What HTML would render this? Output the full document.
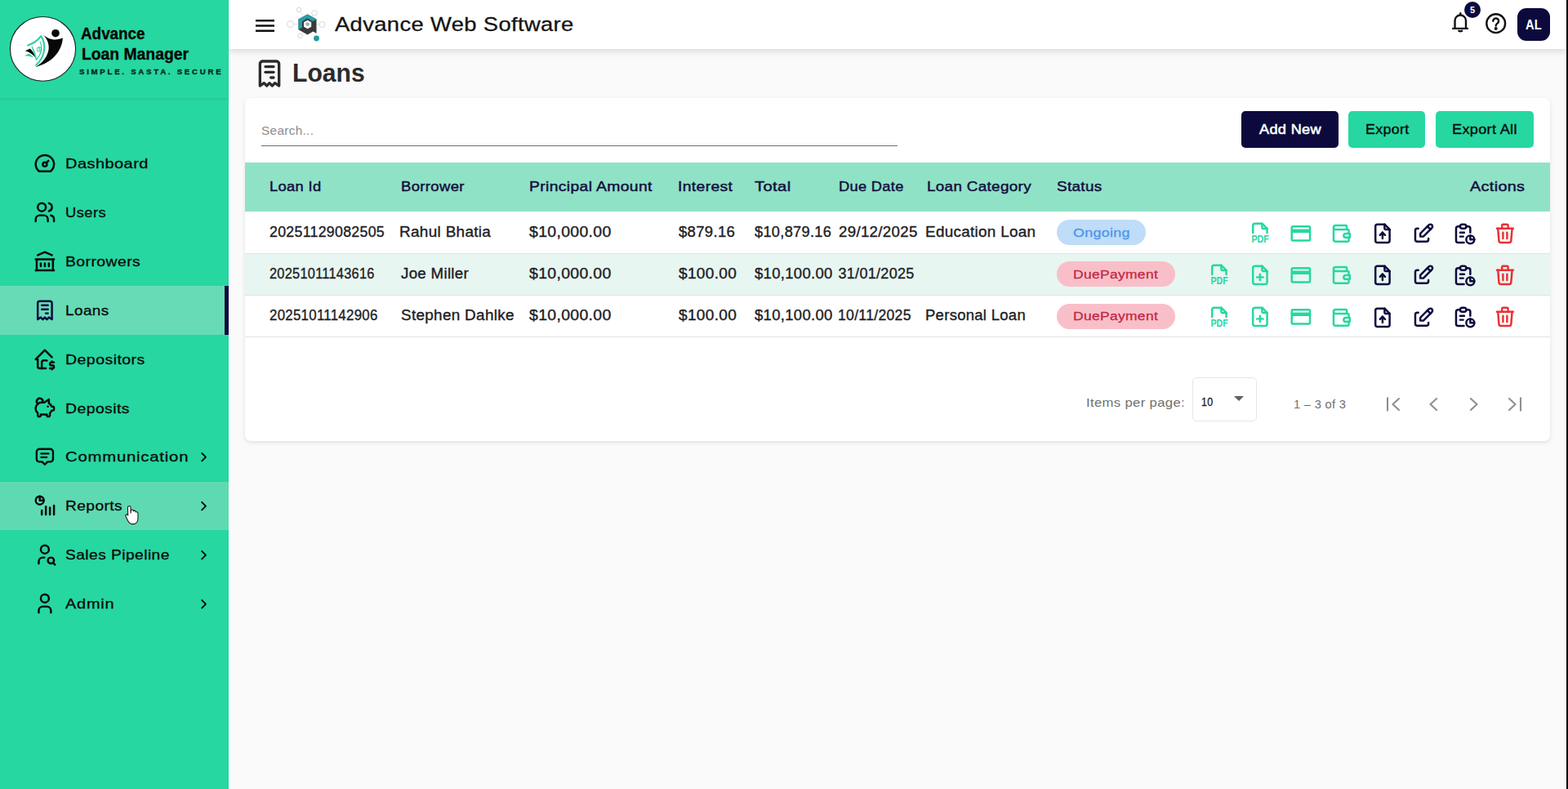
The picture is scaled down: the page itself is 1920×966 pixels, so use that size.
<!DOCTYPE html>
<html lang="en">
<head>
<meta charset="utf-8">
<title>Loans - Advance Loan Manager</title>
<style>
*{box-sizing:border-box;margin:0;padding:0}
html,body{width:1920px;height:966px;overflow:hidden;background:#fbfafa;font-family:"Liberation Sans", sans-serif}
.t{position:absolute;white-space:pre;line-height:1;display:block;transform-origin:0 50%}
svg{display:block}
.side{position:absolute;left:0;top:0;width:280px;height:966px;background:#26d7a1;z-index:3}
.brand{position:absolute;left:0;top:0;width:280px;height:120px;box-shadow:0 1px 3px rgba(0,0,0,.10)}
.item{position:absolute;left:0;width:280px;height:59.9px}
.item.active{background:#66dbb6;border-right:5px solid #0c0a3d}
.item.hover{background:#5edab2}
.ic{position:absolute;width:28px;height:28px}
.chev{position:absolute;left:240.3px;top:20.3px}
.top{position:absolute;left:280px;top:0;width:1638px;height:60px;background:#fff;box-shadow:0 3px 8px rgba(0,0,0,.13);z-index:2}
.burger{position:absolute;left:32.9px;top:23.5px}
.bell{position:absolute;left:1494px;top:13px}
.badge5{position:absolute;left:1513px;top:2px;width:20px;height:20px;border-radius:50%;background:#0c0a3d;color:#fff;font-size:11px;line-height:20px;text-align:center}
.help{position:absolute;left:1537.7px;top:14.6px}
.avatar{position:absolute;left:1578px;top:10px;width:40px;height:40px;border-radius:11px;background:#0c0a3d;color:#fff;font-size:17px;line-height:40px;text-align:center;letter-spacing:.3px}
.pgicon{position:absolute;left:310px;top:70px}
.card{position:absolute;left:300px;top:120px;width:1597.6px;height:420px;background:#fff;border-radius:7px;box-shadow:0 2px 5px rgba(0,0,0,.11)}
.uline{position:absolute;left:320px;top:178px;width:779px;height:1px;background:#6e6e6e}
.btn{position:absolute;top:136px;height:45px;border-radius:5px}
.btn.navy{background:#0c0a3d}
.btn.green{background:#26d7a1}
.thead{position:absolute;left:300px;top:199px;width:1597.6px;height:60px;background:#90e2c6}
.row{position:absolute;left:300px;width:1597.6px;border-bottom:1px solid #e2e2e2}
.row.alt{background:#e8f6f1}
.pill{position:absolute;height:31px;border-radius:16px}
.pill.on{background:#bfdcf8}
.pill.due{background:#f9bfc9}
.act{position:absolute;width:28px;height:28px}
.sel{position:absolute;left:1460px;top:461.5px;width:79px;height:54.5px;border:1px solid #e6e6e6;border-radius:5px;background:#fff}
.caret{position:absolute;left:1511px;top:485px;width:0;height:0;border-left:6px solid transparent;border-right:6px solid transparent;border-top:6px solid #606060}
.pg{position:absolute;width:28px;height:28px;color:#8f8f8f}
.edge{position:absolute;left:1918px;top:0;width:2px;height:966px;background:#000;z-index:5}
</style>
</head>
<body>
<aside class="side">
<div class="brand">
<svg class="logo" width="84" height="84" viewBox="10 18 84 84" style="position:absolute;left:10px;top:18px"><ellipse cx="52.5" cy="59.85" rx="40.1" ry="39.4" fill="#fff" stroke="#15231d" stroke-width="1.1"/><circle cx="68" cy="40.7" r="4.8" fill="#080808"/><path d="M52.6 42.3C56 45.6 61 48.2 66.3 48.4 70.5 48.5 74 47.8 76.8 46.3 76.6 58 68 76 43.2 82.2 53 76.5 58.3 68.5 59.6 60.5 60.4 53.5 57.5 47.3 52.6 42.3z" fill="#080808"/><g fill="none" stroke="#2dcf9f" stroke-linecap="round" stroke-linejoin="round"><path d="M34.2 55.6C41 53.2 46.6 49.3 50.2 44.2 57.3 55 55.3 69.5 44.2 79.8" stroke-width="2.1"/><path d="M39.3 57.6C41.2 61.5 43.2 66.5 44.6 73.2" stroke-width="1.5"/><path d="M44.6 73.2C50.5 66.5 52.5 59 49.3 51.4" stroke-width="1.1"/><circle cx="48.1" cy="60.5" r="2.9" stroke-width="1"/></g><text x="48.1" y="62.3" text-anchor="middle" font-family="Liberation Sans, sans-serif" font-size="5" font-weight="700" fill="#2dcf9f">$</text><path d="M30.8 62.3L36.8 59.6C40 62.5 42 66 43 70.2 40 66.5 36 63.8 30.8 62.3z" fill="#080808"/><path d="M29.9 68.3L34.9 65.8C37.3 66.8 39.3 68.3 41 70.3 37.3 69 33.6 68.3 29.9 68.3z" fill="#2dcf9f"/></svg>
<span class="t b" style="left:99.00px;top:32.00px;color:#050505;font-size:19.6px;letter-spacing:0.00px;font-weight:700;-webkit-text-stroke:0.3px currentColor;transform:scaleX(0.962);">Advance</span><span class="t b" style="left:99.60px;top:57.00px;color:#050505;font-size:19.6px;letter-spacing:0.00px;font-weight:700;-webkit-text-stroke:0.3px currentColor;transform:scaleX(0.986);">Loan Manager</span><span class="t b" style="left:96.80px;top:84.00px;color:#06241a;font-size:9.2px;letter-spacing:2.60px;font-weight:700;-webkit-text-stroke:0.3px currentColor;transform:scaleX(1.051);">SIMPLE. SASTA. SECURE</span>
</div>
<nav>
<div class="item" style="top:170.00px">
<span class="ic" style="left:40.10px;top:14.80px;color:#0a0a0a"><svg width="29.8" height="29.8" viewBox="0 0 24 24" fill="none" stroke="currentColor" stroke-width="2" stroke-linecap="round" stroke-linejoin="round"><path d="M10 13a2 2 0 1 0 4 0a2 2 0 1 0 -4 0"/><path d="M13.45 11.55l2.05 -2.05"/><path d="M6.4 20a9 9 0 1 1 11.2 0z"/></svg></span>
<span class="t" style="left:80.20px;top:23.00px;color:#0a0a0a;font-size:16.9px;letter-spacing:0.40px;-webkit-text-stroke:0.3px currentColor;transform:scaleX(1.181);">Dashboard</span>
</div>
<div class="item" style="top:229.93px">
<span class="ic" style="left:40.10px;top:14.80px;color:#0a0a0a"><svg width="29.8" height="29.8" viewBox="0 0 24 24" fill="none" stroke="currentColor" stroke-width="2" stroke-linecap="round" stroke-linejoin="round"><path d="M5 7a4 4 0 1 0 8 0a4 4 0 1 0 -8 0"/><path d="M3 21v-2a4 4 0 0 1 4 -4h4a4 4 0 0 1 4 4v2"/><path d="M16 3.13a4 4 0 0 1 0 7.75"/><path d="M21 21v-2a4 4 0 0 0 -3 -3.85"/></svg></span>
<span class="t" style="left:80.20px;top:23.07px;color:#0a0a0a;font-size:16.9px;letter-spacing:0.40px;-webkit-text-stroke:0.3px currentColor;transform:scaleX(1.085);">Users</span>
</div>
<div class="item" style="top:289.86px">
<span class="ic" style="left:40.10px;top:14.80px;color:#0a0a0a"><svg width="29.8" height="29.8" viewBox="0 0 24 24" fill="none" stroke="currentColor" stroke-width="2" stroke-linecap="round" stroke-linejoin="round"><path d="M3 21h18"/><path d="M3 10h18"/><path d="M5 6l7 -3l7 3"/><path d="M4 10v11"/><path d="M20 10v11"/><path d="M8 14v3"/><path d="M12 14v3"/><path d="M16 14v3"/></svg></span>
<span class="t" style="left:80.20px;top:23.14px;color:#0a0a0a;font-size:16.9px;letter-spacing:0.40px;-webkit-text-stroke:0.3px currentColor;transform:scaleX(1.145);">Borrowers</span>
</div>
<div class="item active" style="top:349.79px">
<span class="ic" style="left:40.10px;top:14.80px;color:#0c0a3d"><svg width="29.8" height="29.8" viewBox="0 0 24 24" fill="none" stroke="currentColor" stroke-width="2" stroke-linecap="round" stroke-linejoin="round"><path d="M5 21v-16a2 2 0 0 1 2 -2h10a2 2 0 0 1 2 2v16l-3 -2l-2 2l-2 -2l-2 2l-2 -2l-3 2"/><path d="M9 7h6"/><path d="M9 11h6"/><path d="M13 15h2"/></svg></span>
<span class="t" style="left:80.20px;top:23.21px;color:#0a0a0a;font-size:16.9px;letter-spacing:0.40px;-webkit-text-stroke:0.3px currentColor;transform:scaleX(1.117);">Loans</span>
</div>
<div class="item" style="top:409.72px">
<span class="ic" style="left:40.10px;top:14.80px;color:#0a0a0a"><svg width="29.8" height="29.8" viewBox="0 0 24 24" fill="none" stroke="currentColor" stroke-width="2" stroke-linecap="round" stroke-linejoin="round"><path d="M19 10l-7 -7l-9 9h2v7a2 2 0 0 0 2 2h6"/><path d="M9 21v-6a2 2 0 0 1 2 -2h2c.387 0 .748 .11 1.054 .3"/><path d="M21 15h-2.5a1.5 1.5 0 0 0 0 3h1a1.5 1.5 0 0 1 0 3h-2.5"/><path d="M19 21v1m0 -8v1"/></svg></span>
<span class="t" style="left:80.20px;top:23.28px;color:#0a0a0a;font-size:16.9px;letter-spacing:0.40px;-webkit-text-stroke:0.3px currentColor;transform:scaleX(1.154);">Depositors</span>
</div>
<div class="item" style="top:469.65px">
<span class="ic" style="left:40.10px;top:14.80px;color:#0a0a0a"><svg width="29.8" height="29.8" viewBox="0 0 24 24" fill="none" stroke="currentColor" stroke-width="2" stroke-linecap="round" stroke-linejoin="round"><path d="M15 11v.01"/><path d="M5.173 8.378a3 3 0 1 1 4.656 -1.377"/><path d="M16 4v3.803a6.019 6.019 0 0 1 2.658 3.197h1.341a1 1 0 0 1 1 1v2a1 1 0 0 1 -1 1h-1.342c-.336 .95 -.907 1.8 -1.658 2.473v2.027a1.5 1.5 0 0 1 -3 0v-.583a6.04 6.04 0 0 1 -1 .083h-4a6.04 6.04 0 0 1 -1 -.083v.583a1.5 1.5 0 0 1 -3 0v-2.027a6 6 0 0 1 4 -10.473h2.5l4.5 -3z"/></svg></span>
<span class="t" style="left:80.20px;top:23.35px;color:#0a0a0a;font-size:16.9px;letter-spacing:0.40px;-webkit-text-stroke:0.3px currentColor;transform:scaleX(1.146);">Deposits</span>
</div>
<div class="item" style="top:529.58px">
<span class="ic" style="left:40.10px;top:14.80px;color:#0a0a0a"><svg width="29.8" height="29.8" viewBox="0 0 24 24" fill="none" stroke="currentColor" stroke-width="2.1" stroke-linecap="round" stroke-linejoin="round"><g transform="translate(12 12.3) scale(.9) translate(-12 -12.5)"><path d="M8 9h8"/><path d="M8 13h6"/><path d="M9 18h-3a3 3 0 0 1 -3 -3v-8a3 3 0 0 1 3 -3h12a3 3 0 0 1 3 3v8a3 3 0 0 1 -3 3h-3l-3 3l-3 -3z"/></g></svg></span>
<span class="t" style="left:80.20px;top:22.42px;color:#0a0a0a;font-size:16.9px;letter-spacing:0.66px;-webkit-text-stroke:0.3px currentColor;transform:scaleX(1.201);">Communication</span>
<span class="chev"><svg width="19.2" height="19.2" viewBox="0 0 24 24" fill="none" stroke="currentColor" stroke-width="2.3" stroke-linecap="round" stroke-linejoin="round"><path d="M9 6l6 6l-6 6"/></svg></span>
</div>
<div class="item hover" style="top:589.51px">
<span class="ic" style="left:40.10px;top:14.80px;color:#0a0a0a"><svg width="29.8" height="29.8" viewBox="0 0 24 24" fill="none" stroke="currentColor" stroke-width="2" stroke-linecap="round" stroke-linejoin="round"><path d="M3 7a4 4 0 1 0 8 0a4 4 0 1 0 -8 0"/><path d="M7 3v4h4"/><path d="M9 17v4"/><path d="M17 14v7"/><path d="M13 13v8"/><path d="M21 12v9"/></svg></span>
<span class="t" style="left:80.20px;top:22.49px;color:#0a0a0a;font-size:16.9px;letter-spacing:0.40px;-webkit-text-stroke:0.3px currentColor;transform:scaleX(1.131);">Reports</span>
<span class="chev"><svg width="19.2" height="19.2" viewBox="0 0 24 24" fill="none" stroke="currentColor" stroke-width="2.3" stroke-linecap="round" stroke-linejoin="round"><path d="M9 6l6 6l-6 6"/></svg></span>
</div>
<div class="item" style="top:649.44px">
<span class="ic" style="left:40.10px;top:14.80px;color:#0a0a0a"><svg width="29.8" height="29.8" viewBox="0 0 24 24" fill="none" stroke="currentColor" stroke-width="2" stroke-linecap="round" stroke-linejoin="round"><path d="M8 7a4 4 0 1 0 8 0a4 4 0 0 0 -8 0"/><path d="M6 21v-2a4 4 0 0 1 4 -4h1.5"/><path d="M15 18a3 3 0 1 0 6 0a3 3 0 1 0 -6 0"/><path d="M20.2 20.2l1.8 1.8"/></svg></span>
<span class="t" style="left:80.20px;top:22.56px;color:#0a0a0a;font-size:16.9px;letter-spacing:0.40px;-webkit-text-stroke:0.3px currentColor;transform:scaleX(1.135);">Sales Pipeline</span>
<span class="chev"><svg width="19.2" height="19.2" viewBox="0 0 24 24" fill="none" stroke="currentColor" stroke-width="2.3" stroke-linecap="round" stroke-linejoin="round"><path d="M9 6l6 6l-6 6"/></svg></span>
</div>
<div class="item" style="top:709.37px">
<span class="ic" style="left:40.10px;top:14.80px;color:#0a0a0a"><svg width="29.8" height="29.8" viewBox="0 0 24 24" fill="none" stroke="currentColor" stroke-width="2" stroke-linecap="round" stroke-linejoin="round"><path d="M8 7a4 4 0 1 0 8 0a4 4 0 0 0 -8 0"/><path d="M6 21v-2a4 4 0 0 1 4 -4h4a4 4 0 0 1 4 4v2"/></svg></span>
<span class="t" style="left:80.20px;top:22.63px;color:#0a0a0a;font-size:16.9px;letter-spacing:0.67px;-webkit-text-stroke:0.3px currentColor;transform:scaleX(1.178);">Admin</span>
<span class="chev"><svg width="19.2" height="19.2" viewBox="0 0 24 24" fill="none" stroke="currentColor" stroke-width="2.3" stroke-linecap="round" stroke-linejoin="round"><path d="M9 6l6 6l-6 6"/></svg></span>
</div>
</nav>
<svg width="18.9" height="25.2" viewBox="0 0 18 24" style="position:absolute;left:152.6px;top:618.3px;z-index:9"><path d="M5 1.5c1 0 1.7.7 1.7 1.7V10l.3-3c0-.8.7-1.3 1.4-1.3s1.4.5 1.4 1.3v.6c.2-.5.8-.8 1.4-.8.8 0 1.4.6 1.4 1.4v.7c.2-.4.7-.6 1.2-.6.8 0 1.4.6 1.4 1.4V16c0 3.5-2 6.5-6 6.5-3 0-4.5-1.5-5.8-4L1 13.5c-.4-.8-.2-1.6.5-2 .7-.4 1.5-.1 2 .5l-.2-8.8c0-1 .7-1.7 1.7-1.7z" fill="#fff" stroke="#111" stroke-width="1"/></svg>
</aside>
<header class="top">
<span class="burger"><svg width="23.4" height="15" viewBox="0 0 23.4 15"><path d="M0 1.25h23.4M0 7.5h23.4M0 13.75h23.4" stroke="#111" stroke-width="2.4" fill="none"/></svg></span>
<svg width="52" height="52" viewBox="0 0 52 52" style="position:absolute;left:68px;top:4px"><g fill="none" stroke="#d6d6d6" stroke-width="1"><circle cx="18" cy="8" r="2.8"/><circle cx="37" cy="12" r="3.3"/><circle cx="7.5" cy="25.5" r="4"/><circle cx="46.5" cy="26" r="3.5"/><circle cx="19.5" cy="40" r="2.8"/><path d="M20 10.3l3.5 4.5M35 15l-1.5 2M11.5 25.5h5M43 26h-3M21.5 38l2-2" stroke-width=".7"/></g><path d="M28.5 13.5l11 6v17.5l-4-2.5-7 4-11-6.2v-12.8z" fill="#3a3a3c"/><path d="M28.5 13.5l11 6-4.5 2.8-6.5-3.8-6.5 3.8v7.5l-4.5 2.5v-12.8z" fill="#259ea6"/><path d="M28.6 20.7l4.6 2.65v5.3l-4.6 2.65-4.6-2.65v-5.3z" fill="#fff"/><circle cx="28.6" cy="25.6" r="2.4" fill="#a9adad"/><circle cx="39.5" cy="43" r="3.4" fill="#1f9aa0"/></svg>
<span class="t" style="left:130.40px;top:18.00px;color:#141414;font-size:24.3px;letter-spacing:0.30px;-webkit-text-stroke:0.3px currentColor;transform:scaleX(1.128);">Advance Web Software</span>
<span class="bell"><svg width="28" height="28" viewBox="0 0 28 28" fill="none" stroke="#111" stroke-width="2.4" stroke-linecap="round" stroke-linejoin="round"><path d="M7.5 21.9V12.25a6.75 6.75 0 0 1 13.5 0V21.9"/><path d="M5.2 21.9h17.7"/><path d="M12.3 24.7q1.95 1.1 3.9 0"/><path d="M14.25 3.3v1.7"/></svg></span><span class="badge5"><b>5</b></span>
<span class="help"><svg width="27.4" height="27.4" viewBox="0 0 24 24" fill="none" stroke="currentColor" stroke-width="2.1" stroke-linecap="round" stroke-linejoin="round" style="color:#111"><circle cx="12" cy="12" r="10"/><path d="M9 9.5a3 3 0 1 1 4.5 2.6c-1 .6-1.5 1.2-1.5 2.4"/><circle cx="12" cy="17.5" r=".7" fill="currentColor"/></svg></span>
<span class="avatar"></span>
<span class="t" style="left:1588.40px;top:22.00px;color:#fff;font-size:16.4px;letter-spacing:0.30px;font-weight:700;transform:scaleX(0.895);">AL</span>
</header>
<main>
<span class="pgicon"><svg width="40" height="40" viewBox="0 0 24 24" fill="none" stroke="currentColor" stroke-width="2" stroke-linecap="round" stroke-linejoin="round" style="color:#2b2b2b"><path d="M5 21v-16a2 2 0 0 1 2 -2h10a2 2 0 0 1 2 2v16l-3 -2l-2 2l-2 -2l-2 2l-2 -2l-3 2"/><path d="M9 7h6"/><path d="M9 11h6"/><path d="M13 15h2"/></svg></span>
<span class="t" style="left:357.62px;top:74.00px;color:#2b2b2b;font-size:30.6px;letter-spacing:0.00px;font-weight:700;transform:scaleX(0.984);">Loans</span>
<section class="card">
</section>
<span class="t" style="left:320.00px;top:153.00px;color:#8c8c8c;font-size:14.5px;letter-spacing:0.30px;transform:scaleX(1.058);">Search...</span>
<div class="uline"></div>
<div class="btn navy" style="left:1520px;width:119px"></div>
<span class="t" style="left:1542.07px;top:150.00px;color:#fff;font-size:17px;letter-spacing:0.30px;-webkit-text-stroke:0.55px currentColor;transform:scaleX(1.068);">Add New</span>
<div class="btn green" style="left:1651px;width:94px"></div>
<span class="t" style="left:1672.00px;top:150.00px;color:#0a0a0a;font-size:17px;letter-spacing:0.30px;-webkit-text-stroke:0.35px currentColor;transform:scaleX(1.049);">Export</span>
<div class="btn green" style="left:1758px;width:120px"></div>
<span class="t" style="left:1778.00px;top:150.00px;color:#0a0a0a;font-size:17px;letter-spacing:0.30px;-webkit-text-stroke:0.35px currentColor;transform:scaleX(1.067);">Export All</span>
<div class="thead"></div>
<span class="t h" style="left:330.00px;top:220.00px;color:#12103f;font-size:17px;letter-spacing:0.30px;-webkit-text-stroke:0.45px currentColor;transform:scaleX(1.078);">Loan Id</span>
<span class="t h" style="left:490.50px;top:220.00px;color:#12103f;font-size:17px;letter-spacing:0.30px;-webkit-text-stroke:0.45px currentColor;transform:scaleX(1.090);">Borrower</span>
<span class="t h" style="left:647.50px;top:220.00px;color:#12103f;font-size:17px;letter-spacing:0.30px;-webkit-text-stroke:0.45px currentColor;transform:scaleX(1.139);">Principal Amount</span>
<span class="t h" style="left:829.86px;top:220.00px;color:#12103f;font-size:17px;letter-spacing:0.30px;-webkit-text-stroke:0.45px currentColor;transform:scaleX(1.138);">Interest</span>
<span class="t h" style="left:924.00px;top:220.00px;color:#12103f;font-size:17px;letter-spacing:0.30px;-webkit-text-stroke:0.45px currentColor;transform:scaleX(1.189);">Total</span>
<span class="t h" style="left:1026.50px;top:220.00px;color:#12103f;font-size:17px;letter-spacing:0.30px;-webkit-text-stroke:0.45px currentColor;transform:scaleX(1.074);">Due Date</span>
<span class="t h" style="left:1134.50px;top:220.00px;color:#12103f;font-size:17px;letter-spacing:0.30px;-webkit-text-stroke:0.45px currentColor;transform:scaleX(1.108);">Loan Category</span>
<span class="t h" style="left:1294.00px;top:220.00px;color:#12103f;font-size:17px;letter-spacing:0.30px;-webkit-text-stroke:0.45px currentColor;transform:scaleX(1.110);">Status</span>
<span class="t h" style="left:1800.00px;top:220.00px;color:#12103f;font-size:17px;letter-spacing:0.30px;-webkit-text-stroke:0.45px currentColor;transform:scaleX(1.164);">Actions</span>
<div class="row" style="top:259.00px;height:52.00px"></div>
<span class="t" style="left:330.00px;top:275.00px;color:#202024;font-size:18px;letter-spacing:0.30px;-webkit-text-stroke:0.35px currentColor;transform:scaleX(0.986);">20251129082505</span>
<span class="t" style="left:489.45px;top:275.00px;color:#202024;font-size:18px;letter-spacing:0.30px;-webkit-text-stroke:0.35px currentColor;transform:scaleX(1.052);">Rahul Bhatia</span>
<span class="t" style="left:647.50px;top:275.00px;color:#202024;font-size:18px;letter-spacing:0.30px;-webkit-text-stroke:0.35px currentColor;transform:scaleX(1.081);">$10,000.00</span>
<span class="t" style="left:831.00px;top:275.00px;color:#202024;font-size:18px;letter-spacing:0.30px;-webkit-text-stroke:0.35px currentColor;transform:scaleX(1.030);">$879.16</span>
<span class="t" style="left:924.00px;top:275.00px;color:#202024;font-size:18px;letter-spacing:0.30px;-webkit-text-stroke:0.35px currentColor;transform:scaleX(1.011);">$10,879.16</span>
<span class="t" style="left:1026.50px;top:275.00px;color:#202024;font-size:18px;letter-spacing:0.30px;-webkit-text-stroke:0.35px currentColor;transform:scaleX(1.038);">29/12/2025</span>
<span class="t" style="left:1133.45px;top:275.00px;color:#202024;font-size:18px;letter-spacing:0.30px;-webkit-text-stroke:0.35px currentColor;transform:scaleX(1.047);">Education Loan</span>
<div class="pill on" style="left:1294px;top:269.00px;width:109px"></div>
<span class="t" style="left:1314.00px;top:277.00px;color:#4a96ea;font-size:15.5px;letter-spacing:0.30px;-webkit-text-stroke:0.3px currentColor;transform:scaleX(1.150);">Ongoing</span>
<span class="act" style="left:1527.50px;top:269.90px;color:#26d7a1"><svg width="29.8" height="29.8" viewBox="0 0 24 24" fill="none" stroke="currentColor" stroke-width="2" stroke-linecap="round" stroke-linejoin="round"><path d="M14 3v4a1 1 0 0 0 1 1h4"/><path d="M5 12v-7a2 2 0 0 1 2 -2h7l5 5v4"/><text x="3.6" y="21.9" font-family="Liberation Sans, sans-serif" font-size="10.4" font-weight="700" fill="currentColor" stroke="none" textLength="17.2" lengthAdjust="spacingAndGlyphs">PDF</text></svg></span>
<span class="act" style="left:1578.30px;top:270.60px;color:#26d7a1"><svg width="29.8" height="29.8" viewBox="0 0 24 24" fill="none" stroke="currentColor" stroke-width="2" stroke-linecap="round" stroke-linejoin="round"><rect x="3" y="5" width="18" height="14" rx="1.2"/><path d="M3 9.5h18" stroke-width="3.6" stroke-linecap="butt"/></svg></span>
<span class="act" style="left:1628.10px;top:271.00px;color:#26d7a1"><svg width="29.8" height="29.8" viewBox="0 0 24 24" fill="none" stroke="currentColor" stroke-width="2" stroke-linecap="round" stroke-linejoin="round"><path d="M17 8v-3a1 1 0 0 0 -1 -1h-10a2 2 0 0 0 0 4h12a1 1 0 0 1 1 1v3m0 4v3a1 1 0 0 1 -1 1h-12a2 2 0 0 1 -2 -2v-12"/><path d="M20 12v4h-4a2 2 0 0 1 0 -4h4"/></svg></span>
<span class="act" style="left:1678.10px;top:270.90px;color:#0c0a3d"><svg width="29.8" height="29.8" viewBox="0 0 24 24" fill="none" stroke="currentColor" stroke-width="2" stroke-linecap="round" stroke-linejoin="round"><path d="M14 3v4a1 1 0 0 0 1 1h4"/><path d="M17 21h-10a2 2 0 0 1 -2 -2v-14a2 2 0 0 1 2 -2h7l5 5v11a2 2 0 0 1 -2 2z"/><path d="M12 11v6"/><path d="M9.5 13.5l2.5 -2.5l2.5 2.5"/></svg></span>
<span class="act" style="left:1728.30px;top:271.00px;color:#0c0a3d"><svg width="29.8" height="29.8" viewBox="0 0 24 24" fill="none" stroke="currentColor" stroke-width="2" stroke-linecap="round" stroke-linejoin="round"><path d="M7 7h-1a2 2 0 0 0 -2 2v9a2 2 0 0 0 2 2h9a2 2 0 0 0 2 -2v-1"/><path d="M20.385 6.585a2.1 2.1 0 0 0 -2.97 -2.97l-8.415 8.385v3h3l8.385 -8.415z"/><path d="M16 5l3 3"/></svg></span>
<span class="act" style="left:1777.90px;top:270.70px;color:#0c0a3d"><svg width="29.8" height="29.8" viewBox="0 0 24 24" fill="none" stroke="currentColor" stroke-width="2" stroke-linecap="round" stroke-linejoin="round"><path d="M8 5h-2a2 2 0 0 0 -2 2v12a2 2 0 0 0 2 2h5.697"/><path d="M18 14v4h4"/><path d="M18 11v-4a2 2 0 0 0 -2 -2h-2"/><path d="M8 5a2 2 0 0 1 2 -2h2a2 2 0 0 1 2 2a2 2 0 0 1 -2 2h-2a2 2 0 0 1 -2 -2z"/><path d="M14 18a4 4 0 1 0 8 0a4 4 0 1 0 -8 0"/><path d="M8 11h4"/><path d="M8 15h3"/></svg></span>
<span class="act" style="left:1828.00px;top:270.80px;color:#ea3136"><svg width="29.8" height="29.8" viewBox="0 0 24 24" fill="none" stroke="currentColor" stroke-width="2" stroke-linecap="round" stroke-linejoin="round"><path d="M4 7h16"/><path d="M10 11v6"/><path d="M14 11v6"/><path d="M5 7l1 12a2 2 0 0 0 2 2h8a2 2 0 0 0 2 -2l1 -12"/><path d="M9 7v-3a1 1 0 0 1 1 -1h4a1 1 0 0 1 1 1v3"/></svg></span>
<div class="row alt" style="top:311.00px;height:51.00px"></div>
<span class="t" style="left:330.00px;top:326.00px;color:#202024;font-size:18px;letter-spacing:0.30px;-webkit-text-stroke:0.35px currentColor;transform:scaleX(0.908);">20251011143616</span>
<span class="t" style="left:490.50px;top:326.00px;color:#202024;font-size:18px;letter-spacing:0.30px;-webkit-text-stroke:0.35px currentColor;transform:scaleX(1.038);">Joe Miller</span>
<span class="t" style="left:647.50px;top:326.00px;color:#202024;font-size:18px;letter-spacing:0.30px;-webkit-text-stroke:0.35px currentColor;transform:scaleX(1.081);">$10,000.00</span>
<span class="t" style="left:831.00px;top:326.00px;color:#202024;font-size:18px;letter-spacing:0.30px;-webkit-text-stroke:0.35px currentColor;transform:scaleX(1.060);">$100.00</span>
<span class="t" style="left:924.00px;top:326.00px;color:#202024;font-size:18px;letter-spacing:0.30px;-webkit-text-stroke:0.35px currentColor;transform:scaleX(1.027);">$10,100.00</span>
<span class="t" style="left:1026.50px;top:326.00px;color:#202024;font-size:18px;letter-spacing:0.30px;-webkit-text-stroke:0.35px currentColor;">31/01/2025</span>
<div class="pill due" style="left:1294px;top:320.33px;width:144.5px"></div>
<span class="t" style="left:1314.00px;top:328.00px;color:#c22744;font-size:15.5px;letter-spacing:0.30px;-webkit-text-stroke:0.3px currentColor;transform:scaleX(1.124);">DuePayment</span>
<span class="act" style="left:1477.50px;top:321.23px;color:#26d7a1"><svg width="29.8" height="29.8" viewBox="0 0 24 24" fill="none" stroke="currentColor" stroke-width="2" stroke-linecap="round" stroke-linejoin="round"><path d="M14 3v4a1 1 0 0 0 1 1h4"/><path d="M5 12v-7a2 2 0 0 1 2 -2h7l5 5v4"/><text x="3.6" y="21.9" font-family="Liberation Sans, sans-serif" font-size="10.4" font-weight="700" fill="currentColor" stroke="none" textLength="17.2" lengthAdjust="spacingAndGlyphs">PDF</text></svg></span>
<span class="act" style="left:1528.30px;top:321.53px;color:#26d7a1"><svg width="29.8" height="29.8" viewBox="0 0 24 24" fill="none" stroke="currentColor" stroke-width="2" stroke-linecap="round" stroke-linejoin="round"><path d="M14 3v4a1 1 0 0 0 1 1h4"/><path d="M17 21h-10a2 2 0 0 1 -2 -2v-14a2 2 0 0 1 2 -2h7l5 5v11a2 2 0 0 1 -2 2z"/><path d="M12 11v6"/><path d="M9 14h6"/></svg></span>
<span class="act" style="left:1578.30px;top:321.93px;color:#26d7a1"><svg width="29.8" height="29.8" viewBox="0 0 24 24" fill="none" stroke="currentColor" stroke-width="2" stroke-linecap="round" stroke-linejoin="round"><rect x="3" y="5" width="18" height="14" rx="1.2"/><path d="M3 9.5h18" stroke-width="3.6" stroke-linecap="butt"/></svg></span>
<span class="act" style="left:1628.10px;top:322.33px;color:#26d7a1"><svg width="29.8" height="29.8" viewBox="0 0 24 24" fill="none" stroke="currentColor" stroke-width="2" stroke-linecap="round" stroke-linejoin="round"><path d="M17 8v-3a1 1 0 0 0 -1 -1h-10a2 2 0 0 0 0 4h12a1 1 0 0 1 1 1v3m0 4v3a1 1 0 0 1 -1 1h-12a2 2 0 0 1 -2 -2v-12"/><path d="M20 12v4h-4a2 2 0 0 1 0 -4h4"/></svg></span>
<span class="act" style="left:1678.10px;top:322.23px;color:#0c0a3d"><svg width="29.8" height="29.8" viewBox="0 0 24 24" fill="none" stroke="currentColor" stroke-width="2" stroke-linecap="round" stroke-linejoin="round"><path d="M14 3v4a1 1 0 0 0 1 1h4"/><path d="M17 21h-10a2 2 0 0 1 -2 -2v-14a2 2 0 0 1 2 -2h7l5 5v11a2 2 0 0 1 -2 2z"/><path d="M12 11v6"/><path d="M9.5 13.5l2.5 -2.5l2.5 2.5"/></svg></span>
<span class="act" style="left:1728.30px;top:322.33px;color:#0c0a3d"><svg width="29.8" height="29.8" viewBox="0 0 24 24" fill="none" stroke="currentColor" stroke-width="2" stroke-linecap="round" stroke-linejoin="round"><path d="M7 7h-1a2 2 0 0 0 -2 2v9a2 2 0 0 0 2 2h9a2 2 0 0 0 2 -2v-1"/><path d="M20.385 6.585a2.1 2.1 0 0 0 -2.97 -2.97l-8.415 8.385v3h3l8.385 -8.415z"/><path d="M16 5l3 3"/></svg></span>
<span class="act" style="left:1777.90px;top:322.03px;color:#0c0a3d"><svg width="29.8" height="29.8" viewBox="0 0 24 24" fill="none" stroke="currentColor" stroke-width="2" stroke-linecap="round" stroke-linejoin="round"><path d="M8 5h-2a2 2 0 0 0 -2 2v12a2 2 0 0 0 2 2h5.697"/><path d="M18 14v4h4"/><path d="M18 11v-4a2 2 0 0 0 -2 -2h-2"/><path d="M8 5a2 2 0 0 1 2 -2h2a2 2 0 0 1 2 2a2 2 0 0 1 -2 2h-2a2 2 0 0 1 -2 -2z"/><path d="M14 18a4 4 0 1 0 8 0a4 4 0 1 0 -8 0"/><path d="M8 11h4"/><path d="M8 15h3"/></svg></span>
<span class="act" style="left:1828.00px;top:322.13px;color:#ea3136"><svg width="29.8" height="29.8" viewBox="0 0 24 24" fill="none" stroke="currentColor" stroke-width="2" stroke-linecap="round" stroke-linejoin="round"><path d="M4 7h16"/><path d="M10 11v6"/><path d="M14 11v6"/><path d="M5 7l1 12a2 2 0 0 0 2 2h8a2 2 0 0 0 2 -2l1 -12"/><path d="M9 7v-3a1 1 0 0 1 1 -1h4a1 1 0 0 1 1 1v3"/></svg></span>
<div class="row" style="top:362.00px;height:51.00px"></div>
<span class="t" style="left:330.00px;top:377.00px;color:#202024;font-size:18px;letter-spacing:0.30px;-webkit-text-stroke:0.35px currentColor;transform:scaleX(0.936);">20251011142906</span>
<span class="t" style="left:490.50px;top:377.00px;color:#202024;font-size:18px;letter-spacing:0.30px;-webkit-text-stroke:0.35px currentColor;transform:scaleX(1.049);">Stephen Dahlke</span>
<span class="t" style="left:647.50px;top:377.00px;color:#202024;font-size:18px;letter-spacing:0.30px;-webkit-text-stroke:0.35px currentColor;transform:scaleX(1.081);">$10,000.00</span>
<span class="t" style="left:831.00px;top:377.00px;color:#202024;font-size:18px;letter-spacing:0.30px;-webkit-text-stroke:0.35px currentColor;transform:scaleX(1.060);">$100.00</span>
<span class="t" style="left:924.00px;top:377.00px;color:#202024;font-size:18px;letter-spacing:0.30px;-webkit-text-stroke:0.35px currentColor;transform:scaleX(1.027);">$10,100.00</span>
<span class="t" style="left:1025.52px;top:377.00px;color:#202024;font-size:18px;letter-spacing:0.30px;-webkit-text-stroke:0.35px currentColor;transform:scaleX(0.978);">10/11/2025</span>
<span class="t" style="left:1133.47px;top:377.00px;color:#202024;font-size:18px;letter-spacing:0.30px;-webkit-text-stroke:0.35px currentColor;transform:scaleX(1.025);">Personal Loan</span>
<div class="pill due" style="left:1294px;top:371.67px;width:144.5px"></div>
<span class="t" style="left:1314.00px;top:379.00px;color:#c22744;font-size:15.5px;letter-spacing:0.30px;-webkit-text-stroke:0.3px currentColor;transform:scaleX(1.124);">DuePayment</span>
<span class="act" style="left:1477.50px;top:372.57px;color:#26d7a1"><svg width="29.8" height="29.8" viewBox="0 0 24 24" fill="none" stroke="currentColor" stroke-width="2" stroke-linecap="round" stroke-linejoin="round"><path d="M14 3v4a1 1 0 0 0 1 1h4"/><path d="M5 12v-7a2 2 0 0 1 2 -2h7l5 5v4"/><text x="3.6" y="21.9" font-family="Liberation Sans, sans-serif" font-size="10.4" font-weight="700" fill="currentColor" stroke="none" textLength="17.2" lengthAdjust="spacingAndGlyphs">PDF</text></svg></span>
<span class="act" style="left:1528.30px;top:372.87px;color:#26d7a1"><svg width="29.8" height="29.8" viewBox="0 0 24 24" fill="none" stroke="currentColor" stroke-width="2" stroke-linecap="round" stroke-linejoin="round"><path d="M14 3v4a1 1 0 0 0 1 1h4"/><path d="M17 21h-10a2 2 0 0 1 -2 -2v-14a2 2 0 0 1 2 -2h7l5 5v11a2 2 0 0 1 -2 2z"/><path d="M12 11v6"/><path d="M9 14h6"/></svg></span>
<span class="act" style="left:1578.30px;top:373.27px;color:#26d7a1"><svg width="29.8" height="29.8" viewBox="0 0 24 24" fill="none" stroke="currentColor" stroke-width="2" stroke-linecap="round" stroke-linejoin="round"><rect x="3" y="5" width="18" height="14" rx="1.2"/><path d="M3 9.5h18" stroke-width="3.6" stroke-linecap="butt"/></svg></span>
<span class="act" style="left:1628.10px;top:373.67px;color:#26d7a1"><svg width="29.8" height="29.8" viewBox="0 0 24 24" fill="none" stroke="currentColor" stroke-width="2" stroke-linecap="round" stroke-linejoin="round"><path d="M17 8v-3a1 1 0 0 0 -1 -1h-10a2 2 0 0 0 0 4h12a1 1 0 0 1 1 1v3m0 4v3a1 1 0 0 1 -1 1h-12a2 2 0 0 1 -2 -2v-12"/><path d="M20 12v4h-4a2 2 0 0 1 0 -4h4"/></svg></span>
<span class="act" style="left:1678.10px;top:373.57px;color:#0c0a3d"><svg width="29.8" height="29.8" viewBox="0 0 24 24" fill="none" stroke="currentColor" stroke-width="2" stroke-linecap="round" stroke-linejoin="round"><path d="M14 3v4a1 1 0 0 0 1 1h4"/><path d="M17 21h-10a2 2 0 0 1 -2 -2v-14a2 2 0 0 1 2 -2h7l5 5v11a2 2 0 0 1 -2 2z"/><path d="M12 11v6"/><path d="M9.5 13.5l2.5 -2.5l2.5 2.5"/></svg></span>
<span class="act" style="left:1728.30px;top:373.67px;color:#0c0a3d"><svg width="29.8" height="29.8" viewBox="0 0 24 24" fill="none" stroke="currentColor" stroke-width="2" stroke-linecap="round" stroke-linejoin="round"><path d="M7 7h-1a2 2 0 0 0 -2 2v9a2 2 0 0 0 2 2h9a2 2 0 0 0 2 -2v-1"/><path d="M20.385 6.585a2.1 2.1 0 0 0 -2.97 -2.97l-8.415 8.385v3h3l8.385 -8.415z"/><path d="M16 5l3 3"/></svg></span>
<span class="act" style="left:1777.90px;top:373.37px;color:#0c0a3d"><svg width="29.8" height="29.8" viewBox="0 0 24 24" fill="none" stroke="currentColor" stroke-width="2" stroke-linecap="round" stroke-linejoin="round"><path d="M8 5h-2a2 2 0 0 0 -2 2v12a2 2 0 0 0 2 2h5.697"/><path d="M18 14v4h4"/><path d="M18 11v-4a2 2 0 0 0 -2 -2h-2"/><path d="M8 5a2 2 0 0 1 2 -2h2a2 2 0 0 1 2 2a2 2 0 0 1 -2 2h-2a2 2 0 0 1 -2 -2z"/><path d="M14 18a4 4 0 1 0 8 0a4 4 0 1 0 -8 0"/><path d="M8 11h4"/><path d="M8 15h3"/></svg></span>
<span class="act" style="left:1828.00px;top:373.47px;color:#ea3136"><svg width="29.8" height="29.8" viewBox="0 0 24 24" fill="none" stroke="currentColor" stroke-width="2" stroke-linecap="round" stroke-linejoin="round"><path d="M4 7h16"/><path d="M10 11v6"/><path d="M14 11v6"/><path d="M5 7l1 12a2 2 0 0 0 2 2h8a2 2 0 0 0 2 -2l1 -12"/><path d="M9 7v-3a1 1 0 0 1 1 -1h4a1 1 0 0 1 1 1v3"/></svg></span>
<span class="t" style="left:1329.85px;top:486.00px;color:#6f6f6f;font-size:14.5px;letter-spacing:0.30px;transform:scaleX(1.150);">Items per page:</span>
<div class="sel"></div>
<span class="t" style="left:1470.64px;top:485.00px;color:#1c1c1c;font-size:14.5px;letter-spacing:0.30px;-webkit-text-stroke:0.3px currentColor;transform:scaleX(0.862);">10</span>
<span class="caret"></span>
<span class="t" style="left:1583.99px;top:488.00px;color:#6f6f6f;font-size:14.5px;letter-spacing:0.30px;transform:scaleX(1.013);">1 – 3 of 3</span>
<span class="pg" style="left:1692px;top:480.7px"><svg width="28" height="28" viewBox="0 0 24 24" fill="none" stroke="currentColor" stroke-width="1.8" stroke-linecap="round" stroke-linejoin="round"><path d="M6 5.5v13"/><path d="M18 6l-6.5 6 6.5 6"/></svg></span>
<span class="pg" style="left:1741px;top:480.7px"><svg width="28" height="28" viewBox="0 0 24 24" fill="none" stroke="currentColor" stroke-width="1.8" stroke-linecap="round" stroke-linejoin="round"><path d="M15.5 6l-6.5 6 6.5 6"/></svg></span>
<span class="pg" style="left:1791px;top:480.7px"><svg width="28" height="28" viewBox="0 0 24 24" fill="none" stroke="currentColor" stroke-width="1.8" stroke-linecap="round" stroke-linejoin="round"><path d="M8.5 6l6.5 6-6.5 6"/></svg></span>
<span class="pg" style="left:1841px;top:480.7px"><svg width="28" height="28" viewBox="0 0 24 24" fill="none" stroke="currentColor" stroke-width="1.8" stroke-linecap="round" stroke-linejoin="round"><path d="M18 5.5v13"/><path d="M6 6l6.5 6-6.5 6"/></svg></span>
</main>
<div class="edge"></div>
</body>
</html>
